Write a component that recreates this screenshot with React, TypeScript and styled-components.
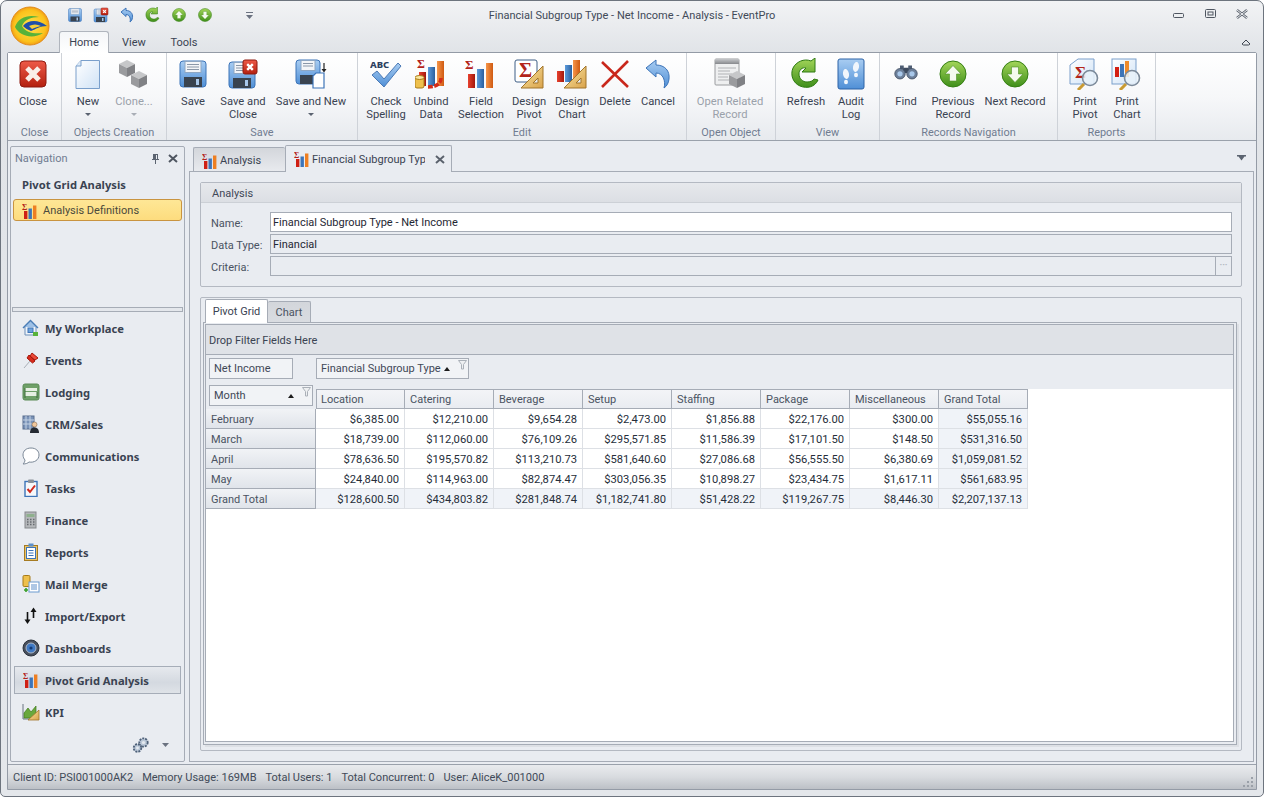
import React from "react";
import styled, { createGlobalStyle } from "styled-components";

const FONT = `Roboto, "Noto Sans", "Liberation Sans", sans-serif`;
const BOLD_FONT = `"Noto Sans", "Open Sans", "Liberation Sans", sans-serif`;

const GlobalStyle = createGlobalStyle`
  html, body {
    margin: 0;
    padding: 0;
    background: #ffffff;
  }
  body {
    font-family: ${FONT};
    font-size: 11px;
    color: #3a4352;
  }
`;

const Window = styled.div`
  width: 1264px;
  height: 797px;
  box-sizing: border-box;
  border: 1px solid #6d747e;
  border-radius: 7px 7px 5px 5px;
  background: linear-gradient(#f2f3f5 0, #e1e4e8 50px, #e4e7eb 100%);
  display: flex;
  flex-direction: column;
  overflow: hidden;
  position: relative;
`;

const TitleBar = styled.div`
  height: 28px;
  display: grid;
  grid-template-columns: 1fr auto 1fr;
  align-items: center;
`;

const LogoSlot = styled.div`
  position: absolute;
  left: 9px;
  top: 5px;
`;

const Qat = styled.div`
  display: flex;
  align-items: center;
  padding-left: 66px;
  gap: 10px;
`;

const QatMore = styled.div`
  margin-left: 18px;
  width: 16px;
  display: flex;
  justify-content: center;
`;

const Title = styled.div`
  color: #414a58;
`;

const WinButtons = styled.div`
  display: flex;
  justify-content: flex-end;
  align-items: center;
  padding: 0 15px 2px 0;
  gap: 20px;
`;

const TabRow = styled.div`
  height: 23px;
  display: flex;
  align-items: flex-end;
  justify-content: space-between;
  padding: 0 12px 0 58px;
`;

const RibbonTabs = styled.div`
  display: flex;
  align-items: flex-end;
`;

const RibbonTab = styled.div<{ $active?: boolean }>`
  width: 50px;
  height: 22px;
  box-sizing: border-box;
  display: flex;
  align-items: center;
  justify-content: center;
  color: #3a4352;
  position: relative;
  margin-bottom: -1px;
  z-index: 2;
  border-radius: 3px 3px 0 0;
  ${(p) =>
    p.$active
      ? `background: linear-gradient(#f4f6f8, #ffffff); border: 1px solid #b0b5bd; border-bottom: none;`
      : ``}
`;

const Frame = styled.div`
  flex: 1;
  margin: 0 6px 6px;
  border: 1px solid #949ba6;
  display: flex;
  flex-direction: column;
  min-height: 0;
  border-radius: 2px 2px 0 0;
`;

const Ribbon = styled.div`
  height: 88px;
  box-sizing: border-box;
  display: flex;
  background: linear-gradient(#ffffff 0, #f6f7f9 45px, #e7eaee 100%);
  border-bottom: 1px solid #9aa1ab;
`;

const Group = styled.div<{ $w: number }>`
  width: ${(p) => p.$w}px;
  box-sizing: border-box;
  display: flex;
  flex-direction: column;
  border-right: 1px solid #ced2d8;
`;

const GroupButtons = styled.div`
  flex: 1;
  display: flex;
  padding-left: 3px;
`;

const GroupCaption = styled.div`
  height: 15px;
  line-height: 15px;
  text-align: center;
  color: #707c90;
  font-size: 10.9px;
`;

const RibbonButton = styled.div<{ $w: number; $off?: boolean }>`
  width: ${(p) => p.$w}px;
  display: flex;
  flex-direction: column;
  align-items: center;
  padding-top: 5px;
  font-size: 11.2px;
  color: ${(p) => (p.$off ? "#9aa1aa" : "#3a4352")};
`;

const IconBox = styled.div`
  width: 32px;
  height: 32px;
  margin-bottom: 5px;
`;

const ButtonLabel = styled.div`
  line-height: 13px;
  text-align: center;
  white-space: pre-line;
`;

const Caret = styled.div<{ $off?: boolean }>`
  width: 0;
  height: 0;
  margin-top: 5px;
  border-left: 3px solid transparent;
  border-right: 3px solid transparent;
  border-top: 3px solid ${(p) => (p.$off ? "#a9aeb6" : "#5b6370")};
`;

const Body = styled.div`
  flex: 1;
  min-height: 0;
  display: flex;
  gap: 4px;
  padding: 5px 2px 2px;
  background: #e9ecf1;
`;

const NavPanel = styled.div`
  width: 175px;
  box-sizing: border-box;
  border: 1px solid #a6acb6;
  border-radius: 2px;
  display: flex;
  flex-direction: column;
  background: #e9ecf1;
`;

const NavHeader = styled.div`
  height: 21px;
  display: flex;
  align-items: center;
  padding: 1px 6px 0 4px;
  color: #717d92;
  gap: 8px;
`;

const NavHeaderText = styled.div`
  flex: 1;
`;

const NavTitle = styled.div`
  font-family: ${BOLD_FONT};
  font-size: 11.2px;
  font-weight: 700;
  color: #3a4352;
  padding: 8px 0 0 11px;
  height: 21px;
  line-height: 15px;
`;

const NavSelected = styled.div`
  margin: 1px 2px 0;
  height: 22px;
  box-sizing: border-box;
  background: linear-gradient(#fee796, #fddc7e);
  border: 1px solid #c99440;
  border-radius: 3px;
  display: flex;
  align-items: center;
  padding: 1px 0 0 8px;
  gap: 5px;
  color: #4b4a3c;
`;

const NavSpacer = styled.div`
  flex: 1;
`;

const NavSplitter = styled.div`
  height: 5px;
  box-sizing: border-box;
  margin: 0 1px;
  border: 1px solid #a6acb6;
  background: #e4e7ec;
`;

const NavList = styled.div`
  display: flex;
  flex-direction: column;
`;

const NavItem = styled.div<{ $active?: boolean }>`
  height: 32px;
  box-sizing: border-box;
  margin: 0 3px;
  padding: 0 0 0 8px;
  display: flex;
  align-items: center;
  gap: 5px;
  font-family: ${BOLD_FONT};
  font-weight: 700;
  font-size: 11.2px;
  color: #3a4352;
  ${(p) =>
    p.$active
      ? `height: 28px; margin: 2px 3px; background: linear-gradient(#e6e9ee, #d4d9e0 60%, #dfe3e8);
         border: 1px solid #a6adb8; padding-left: 7px;`
      : ``}
`;

const NavIcon = styled.div`
  width: 18px;
  height: 18px;
  display: flex;
  align-items: center;
  justify-content: center;
`;

const NavFooter = styled.div`
  height: 33px;
  display: flex;
  align-items: center;
  justify-content: flex-end;
  gap: 12px;
  padding: 0 15px 0 0;
`;

const Main = styled.div`
  flex: 1;
  min-width: 0;
  display: flex;
  flex-direction: column;
`;

const DocTabs = styled.div`
  height: 25px;
  display: flex;
  align-items: flex-end;
  padding-left: 4px;
  position: relative;
`;

const DocTab = styled.div<{ $active?: boolean; $w: number }>`
  width: ${(p) => p.$w}px;
  box-sizing: border-box;
  display: flex;
  align-items: center;
  gap: 2px;
  padding-left: 8px;
  border: 1px solid #a6acb6;
  border-radius: 2px 2px 0 0;
  position: relative;
  z-index: 2;
  ${(p) =>
    p.$active
      ? `height: 27px; margin-bottom: -1px; background: #e9ecf1; border-bottom: none; color: #3a4352;`
      : `height: 24px; padding-top: 2px; background: linear-gradient(#d3d6db, #e8eaee); border-bottom: none; border-right: none;`}
`;

const DocTabText = styled.div`
  width: 113px;
  white-space: nowrap;
  overflow: hidden;
`;

const DocTabMenu = styled.div`
  margin-left: auto;
  margin-right: 8px;
  align-self: center;
  padding-bottom: 2px;
`;

const DocPane = styled.div`
  flex: 1;
  min-height: 0;
  border: 1px solid #a6acb6;
  padding: 10px 11px 10px 10px;
  display: flex;
  flex-direction: column;
  gap: 10px;
`;

const DetailsGroup = styled.div`
  height: 105px;
  box-sizing: border-box;
  border: 1px solid #b4b9c2;
  border-radius: 2px;
`;

const DetailsHeader = styled.div`
  height: 19px;
  line-height: 21px;
  padding-left: 11px;
  background: linear-gradient(#e6e8ec, #dcdfe4);
  border-bottom: 1px solid #ccd0d6;
  color: #3f4857;
`;

const Fields = styled.div`
  display: grid;
  grid-template-columns: 59px 1fr;
  grid-auto-rows: 20px;
  row-gap: 2px;
  padding: 9px 9px 0 10px;
  align-items: center;
`;

const FieldLabel = styled.div`
  color: #4a5362;
  padding-top: 2px;
`;

const FieldInput = styled.div<{ $white?: boolean }>`
  height: 20px;
  box-sizing: border-box;
  border: 1px solid #a6acb6;
  background: ${(p) => (p.$white ? "#ffffff" : "#e9ecf1")};
  line-height: 20px;
  padding-left: 2px;
  color: #1f2733;
  display: flex;
  justify-content: space-between;
`;

const EllipsisButton = styled.div`
  width: 15px;
  border-left: 1px solid #a6acb6;
  color: #b4b9c2;
  text-align: center;
  font-size: 9px;
  line-height: 16px;
  font-weight: 700;
  letter-spacing: 0;
`;

const PivotGroup = styled.div`
  flex: 1;
  min-height: 0;
  box-sizing: border-box;
  border: 1px solid #b4b9c2;
  border-radius: 2px;
  padding: 1px 4px 5px 2px;
  display: flex;
  flex-direction: column;
`;

const InnerTabs = styled.div`
  height: 23px;
  display: flex;
  align-items: flex-end;
  padding-left: 2px;
`;

const InnerTab = styled.div<{ $active?: boolean; $w: number }>`
  width: ${(p) => p.$w}px;
  box-sizing: border-box;
  text-align: center;
  border: 1px solid #a6acb6;
  border-bottom: none;
  border-radius: 2px 2px 0 0;
  position: relative;
  ${(p) =>
    p.$active
      ? `height: 24px; line-height: 24px; margin-bottom: -1px; background: #ffffff; z-index: 2;`
      : `height: 21px; line-height: 21px; background: linear-gradient(#d3d6db, #d9dce1); border-left: none; color: #4a5362;`}
`;

const InnerPane = styled.div`
  flex: 1;
  min-height: 0;
  border: 1px solid #a6acb6;
  padding: 1px 2px 2px 1px;
  box-shadow: 2px 2px 0 #dde0e5;
  display: flex;
`;

const PivotFrame = styled.div`
  flex: 1;
  border: 1px solid #a6acb6;
  background: #ffffff;
  display: flex;
  flex-direction: column;
`;

const DropArea = styled.div`
  height: 29px;
  line-height: 31px;
  padding-left: 3px;
  background: #dfe2e7;
  border-bottom: 1px solid #a6acb6;
  color: #3a4352;
`;

const DataFieldRow = styled.div`
  height: 26px;
  box-sizing: border-box;
  padding: 3px 0 0 3px;
  display: flex;
  gap: 23px;
  background: #e9ecf1;
`;

const FieldChip = styled.div<{ $w: number }>`
  width: ${(p) => p.$w}px;
  height: 21px;
  box-sizing: border-box;
  border: 1px solid #a6acb6;
  background: #f1f3f6;
  padding-left: 4px;
  color: #3f4857;
  display: flex;
  align-items: center;
  position: relative;
`;

const ChipText = styled.div`
  flex: 1;
  white-space: nowrap;
  line-height: 21px;
`;

const SortArrow = styled.div`
  width: 0;
  height: 0;
  border-left: 3.5px solid transparent;
  border-right: 3.5px solid transparent;
  border-bottom: 4px solid #1c1c1c;
  margin-right: 18px;
`;

const ChipFilter = styled.div`
  position: absolute;
  right: 1px;
  top: 1px;
  line-height: 0;
`;

const HeadArea = styled.div`
  display: flex;
`;

const Corner = styled.div`
  width: 110px;
  height: 28px;
  box-sizing: border-box;
  padding: 4px 0 0 3px;
  background: #e9ecf1;
`;

const HeadRight = styled.div`
  flex: 1;
  display: flex;
  flex-direction: column;
`;

const HeadStrip = styled.div`
  height: 8px;
  background: #e9ecf1;
`;

const Cells = styled.div`
  display: flex;
`;

const ColHead = styled.div`
  width: 89px;
  height: 20px;
  box-sizing: border-box;
  border: 1px solid #a6acb6;
  border-left: none;
  background: linear-gradient(#f3f4f7, #e9ecf1);
  line-height: 20px;
  padding-left: 5px;
  color: #4a5362;
  &:first-child {
    border-left: 1px solid #a6acb6;
    padding-left: 4px;
  }
`;

const DataRow = styled.div`
  display: flex;
  height: 20px;
`;

const RowHead = styled.div`
  width: 110px;
  box-sizing: border-box;
  border: 1px solid #a6acb6;
  border-left: none;
  border-top: none;
  background: linear-gradient(#f1f3f6, #e0e4ea);
  line-height: 21px;
  padding-left: 5px;
  color: #4a5362;
`;

const DataCell = styled.div<{ $total?: boolean }>`
  width: 89px;
  box-sizing: border-box;
  border-right: 1px solid #dde0e5;
  border-bottom: 1px solid #dde0e5;
  background: ${(p) => (p.$total ? "#f0f3f8" : "#ffffff")};
  text-align: right;
  padding-right: 5px;
  font-size: 11.2px;
  line-height: 21px;
  color: #262e3a;
`;

const StatusBar = styled.div`
  height: 25px;
  box-sizing: border-box;
  border-top: 1px solid #9aa1ab;
  background: linear-gradient(#e9ebee, #d8dbdf 50%, #bcc0c6);
  display: flex;
  align-items: center;
  padding: 0 2px 0 5px;
  gap: 9px;
  color: #414a58;
`;

const StatusGrip = styled.div`
  margin-left: auto;
  align-self: flex-end;
  line-height: 0;
  padding-bottom: 1px;
`;

const SvgDefs = () => (
  <svg width="0" height="0" style={{ position: "absolute" }}>
    <defs>
      <linearGradient id="gBlue" x1="0" y1="0" x2="0" y2="1">
        <stop offset="0" stopColor="#a9cdf2" />
        <stop offset="1" stopColor="#4f8fd6" />
      </linearGradient>
      <linearGradient id="gRed" x1="0" y1="0" x2="0" y2="1">
        <stop offset="0" stopColor="#ee5a48" />
        <stop offset="1" stopColor="#b3200f" />
      </linearGradient>
      <linearGradient id="gGreen" x1="0" y1="0" x2="0" y2="1">
        <stop offset="0" stopColor="#a4d65a" />
        <stop offset="1" stopColor="#3f8f1a" />
      </linearGradient>
      <linearGradient id="gBarR" x1="0" y1="0" x2="1" y2="0">
        <stop offset="0" stopColor="#e8412e" />
        <stop offset="1" stopColor="#a3180c" />
      </linearGradient>
      <linearGradient id="gBarB" x1="0" y1="0" x2="1" y2="0">
        <stop offset="0" stopColor="#5c9bdc" />
        <stop offset="1" stopColor="#2a5f9e" />
      </linearGradient>
      <linearGradient id="gBarO" x1="0" y1="0" x2="1" y2="0">
        <stop offset="0" stopColor="#f6964a" />
        <stop offset="1" stopColor="#cf5a12" />
      </linearGradient>
      <linearGradient id="gPage" x1="0" y1="0" x2="1" y2="1">
        <stop offset="0" stopColor="#ffffff" />
        <stop offset="1" stopColor="#cfe2f6" />
      </linearGradient>
      <linearGradient id="gGrey" x1="0" y1="0" x2="0" y2="1">
        <stop offset="0" stopColor="#c4c6c9" />
        <stop offset="1" stopColor="#87898d" />
      </linearGradient>
      <linearGradient id="gRuler" x1="0" y1="0" x2="1" y2="1">
        <stop offset="0" stopColor="#fbe9a8" />
        <stop offset="1" stopColor="#d9a24a" />
      </linearGradient>
      <radialGradient id="gLogo" cx="0.5" cy="0.5" r="0.55">
        <stop offset="0" stopColor="#ffe34d" />
        <stop offset="0.75" stopColor="#fbc21c" />
        <stop offset="1" stopColor="#ee8a12" />
      </radialGradient>
    </defs>
  </svg>
);

const Logo = () => (
  <svg width="40" height="40" viewBox="0 0 40 40">
    <circle cx="20" cy="20" r="19" fill="url(#gLogo)" stroke="#e08a18" />
    <path d="M5 21C8 11 19 8 29 11C21 11 14 14 12 20C16 27 24 28 33 27C24 33 10 31 5 21Z" fill="#58b23a" />
    <path d="M13 20C18 14 28 13 37 20C30 20 26 23 21 25C18 24 15 22 13 20Z" fill="#1f4fa8" />
    <path d="M19 20C23 18 27 18 31 20C27 21 24 22 22 23Z" fill="#f4cf3a" />
  </svg>
);

const SaveIcon = ({ s = 32 }: { s?: number }) => (
  <svg width={s} height={s} viewBox="0 0 32 32">
    <rect x="3" y="3" width="26" height="26" rx="3" fill="url(#gBlue)" stroke="#3d74b8" />
    <rect x="8" y="3.5" width="16" height="11" fill="#f3f5f8" stroke="#8ea7c4" />
    <path d="M10 6.5h12M10 9h12M10 11.5h12" stroke="#8a97a8" />
    <rect x="7" y="19" width="18" height="10" fill="#39434f" />
    <rect x="19" y="21" width="3" height="6" fill="#a9c8ea" />
  </svg>
);

const RedBadge = ({ x, y, w }: { x: number; y: number; w: number }) => (
  <g transform={`translate(${x} ${y})`}>
    <rect x="0" y="0" width={w} height={w} rx="2" fill="url(#gRed)" stroke="#8e1a10" />
    <path
      d={`M${w * 0.3} ${w * 0.3}L${w * 0.7} ${w * 0.7}M${w * 0.7} ${w * 0.3}L${w * 0.3} ${w * 0.7}`}
      stroke="#fff"
      strokeWidth={w * 0.17}
    />
  </g>
);

const SaveCloseIcon = ({ s = 32 }: { s?: number }) => (
  <svg width={s} height={s} viewBox="0 0 32 32">
    <rect x="2" y="4" width="26" height="26" rx="3" fill="url(#gBlue)" stroke="#3d74b8" />
    <rect x="7" y="4.5" width="16" height="11" fill="#f3f5f8" stroke="#8ea7c4" />
    <path d="M9 7.5h10M9 10h10M9 12.5h10" stroke="#8a97a8" />
    <rect x="6" y="20" width="18" height="10" fill="#39434f" />
    <rect x="18" y="22" width="3" height="6" fill="#a9c8ea" />
    <RedBadge x={16} y={2} w={14} />
  </svg>
);

const SaveNewIcon = () => (
  <svg width="32" height="32" viewBox="0 0 32 32">
    <rect x="1" y="2" width="24" height="24" rx="3" fill="url(#gBlue)" stroke="#3d74b8" />
    <rect x="6" y="2.5" width="14" height="10" fill="#f3f5f8" stroke="#8ea7c4" />
    <path d="M8 5.5h10M8 8h10" stroke="#8a97a8" />
    <rect x="5" y="17" width="15" height="9" fill="#39434f" />
    <path d="M29 5v8" stroke="#222" strokeWidth="1.2" />
    <path d="M26.5 11h5L29 14.5Z" fill="#222" />
    <path d="M18 18l3-3h8v15H18Z" fill="#fff" stroke="#3d74b8" strokeWidth="1.2" />
  </svg>
);

const CloseIcon = () => (
  <svg width="32" height="32" viewBox="0 0 32 32">
    <rect x="3" y="3" width="26" height="26" rx="4" fill="url(#gRed)" stroke="#8e1a10" />
    <path d="M10 10L22 22M22 10L10 22" stroke="#f9efe9" strokeWidth="5" />
  </svg>
);

const NewIcon = () => (
  <svg width="32" height="32" viewBox="0 0 32 32">
    <path d="M9 2.5H27.5V30.5H4V8Z" fill="url(#gPage)" stroke="#7a9fcb" />
    <path d="M9 2.5V8H4" fill="#dce9f7" stroke="#7a9fcb" />
  </svg>
);

const Cube = ({ x, y }: { x: number; y: number }) => (
  <g transform={`translate(${x} ${y})`}>
    <path d="M0 4L8 0L16 4L8 8Z" fill="#c6c7c9" />
    <path d="M0 4V13L8 17V8Z" fill="#9a9b9e" />
    <path d="M16 4V13L8 17V8Z" fill="#808185" />
  </g>
);

const CubesIcon = () => (
  <svg width="32" height="32" viewBox="0 0 32 32">
    <Cube x={1} y={2} />
    <Cube x={13} y={13} />
  </svg>
);

const CheckIcon = () => (
  <svg width="32" height="32" viewBox="0 0 32 32">
    <text x="0" y="10" fontFamily={BOLD_FONT} fontSize="9.5" fontWeight="800" fill="#2d3f5e">
      ABC
    </text>
    <path d="M2 17L7 13L14 21L28 5L31 8L14 29Z" fill="url(#gBlue)" stroke="#4a79b5" />
  </svg>
);

const Bars = ({ x = 0, y = 0 }: { x?: number; y?: number }) => (
  <g transform={`translate(${x} ${y})`}>
    <rect x="3" y="14" width="7" height="14" fill="url(#gBarR)" />
    <rect x="12" y="9" width="7" height="19" fill="url(#gBarB)" />
    <rect x="21" y="3" width="7" height="25" fill="url(#gBarO)" />
  </g>
);

const Sigma = ({ x, y, fs }: { x: number; y: number; fs: number }) => (
  <text x={x} y={y} fontFamily={`"Liberation Serif", serif`} fontSize={fs} fontWeight="700" fill="#b3241a">
    Σ
  </text>
);

const FieldIcon = () => (
  <svg width="32" height="32" viewBox="0 0 32 32">
    <Bars y={2} />
    <Sigma x={0} y={11} fs={13} />
  </svg>
);

const UnbindIcon = () => (
  <svg width="32" height="32" viewBox="0 0 32 32">
    <Bars x={1} />
    <Sigma x={2} y={10} fs={12} />
    <rect x="0" y="19" width="9" height="11" rx="2" fill="#eec04c" stroke="#a77a18" />
    <ellipse cx="4.5" cy="19.5" rx="4.5" ry="2" fill="#fbe8a0" stroke="#a77a18" />
    <path d="M26 20C26 26 21 29 13 29" stroke="#d42c18" strokeWidth="3.5" fill="none" strokeDasharray="5 1.5" />
  </svg>
);

const Ruler = () => (
  <g>
    <path d="M30 8V30H8Z" fill="url(#gRuler)" stroke="#a1742a" />
    <path d="M25 20V25H20Z" fill="#e9ecef" stroke="#a1742a" />
  </g>
);

const DesignPivotIcon = () => (
  <svg width="32" height="32" viewBox="0 0 32 32">
    <rect x="2" y="2" width="22" height="22" rx="2" fill="#fff" stroke="#3f5f86" />
    <Sigma x={6} y={19} fs={20} />
    <Ruler />
  </svg>
);

const DesignChartIcon = () => (
  <svg width="32" height="32" viewBox="0 0 32 32">
    <rect x="1" y="13" width="7" height="11" fill="url(#gBarR)" />
    <rect x="9" y="7" width="7" height="17" fill="url(#gBarB)" />
    <rect x="17" y="2" width="7" height="22" fill="url(#gBarO)" />
    <Ruler />
  </svg>
);

const DeleteIcon = () => (
  <svg width="32" height="32" viewBox="0 0 32 32">
    <path d="M3 4L29 29M29 3L3 29" stroke="#c9281c" strokeWidth="2.6" />
  </svg>
);

const CancelIcon = ({ s = 32 }: { s?: number }) => (
  <svg width={s} height={s} viewBox="0 0 32 32">
    <path
      d="M4 10L14 2V7C23 7 28 13 27 21C26.5 25 25 28 22 30C24 23 21 15 14 15V19Z"
      fill="url(#gBlue)"
      stroke="#3d74b8"
      strokeWidth={s < 20 ? 2 : 1}
    />
  </svg>
);

const OpenRelatedIcon = () => (
  <svg width="32" height="32" viewBox="0 0 32 32">
    <rect x="1" y="1" width="24" height="26" rx="1" fill="#eeeff0" stroke="#9a9c9f" />
    <rect x="1" y="1" width="24" height="5" fill="url(#gGrey)" />
    <path d="M4 10h18M4 13h12M4 16h14M4 19h10M4 22h12" stroke="#b0b2b5" />
    <Cube x={15} y={13} />
  </svg>
);

const RefreshIcon = ({ s = 32 }: { s?: number }) => (
  <svg width={s} height={s} viewBox="0 0 32 32">
    <path
      d="M28 22C25 29 17 31 10 28C3 25 0 17 3 10C6 4 14 0 21 3L25 0V14H12L16 10C12 9 9 12 9 16C9 21 13 24 17 24C20 24 23 23 24 21Z"
      fill="url(#gGreen)"
      stroke="#2e7a12"
    />
  </svg>
);

const AuditIcon = () => (
  <svg width="32" height="32" viewBox="0 0 32 32">
    <rect x="3" y="1" width="26" height="30" rx="2" fill="url(#gBlue)" stroke="#2c62a6" />
    <ellipse cx="11" cy="16" rx="3" ry="5" fill="#f1f6fc" transform="rotate(-10 11 16)" />
    <ellipse cx="11" cy="24" rx="2" ry="2.3" fill="#f1f6fc" />
    <ellipse cx="21" cy="9" rx="3" ry="5" fill="#f1f6fc" transform="rotate(10 21 9)" />
    <ellipse cx="21" cy="17" rx="2" ry="2.3" fill="#f1f6fc" />
  </svg>
);

const FindIcon = () => (
  <svg width="32" height="32" viewBox="0 0 32 32">
    <g transform="translate(4 3) scale(0.75)">
      <rect x="12" y="9" width="8" height="7" fill="#3d4a5e" />
      <rect x="8" y="6" width="5" height="5" fill="#4e5d73" />
      <rect x="19" y="6" width="5" height="5" fill="#4e5d73" />
      <circle cx="8" cy="17" r="7" fill="#6c7f99" stroke="#3d4a5e" />
      <circle cx="24" cy="17" r="7" fill="#6c7f99" stroke="#3d4a5e" />
      <circle cx="8" cy="17" r="3.5" fill="#a9c8ea" />
      <circle cx="24" cy="17" r="3.5" fill="#a9c8ea" />
    </g>
  </svg>
);

const ArrowCircleIcon = ({ up, s = 32 }: { up?: boolean; s?: number }) => (
  <svg width={s} height={s} viewBox="0 0 32 32">
    <circle cx="16" cy="16" r="13" fill="url(#gGreen)" stroke="#367f14" />
    <g transform={up ? undefined : "rotate(180 16 16)"}>
      <path d="M16 7.5L24 16H19.5V23H12.5V16H8Z" fill="#f5faef" stroke="#4d8f27" strokeWidth="0.6" />
    </g>
  </svg>
);

const Magnifier = () => (
  <g>
    <path d="M15 26L9 32" stroke="#c99a32" strokeWidth="3" />
    <circle cx="21" cy="20" r="7.5" fill="#e9f2fa" fillOpacity="0.85" stroke="#7c8a9a" strokeWidth="1.6" />
  </g>
);

const PrintPivotIcon = () => (
  <svg width="32" height="32" viewBox="0 0 32 32">
    <path d="M9 1H25V26H1V7Z" fill="url(#gPage)" stroke="#7a9fcb" />
    <Sigma x={6} y={20} fs={17} />
    <Magnifier />
  </svg>
);

const PrintChartIcon = () => (
  <svg width="32" height="32" viewBox="0 0 32 32">
    <rect x="1" y="1" width="24" height="25" fill="url(#gPage)" stroke="#7a9fcb" />
    <rect x="4" y="9" width="4" height="10" fill="#d31f12" />
    <rect x="9" y="6" width="4" height="13" fill="#3d74b8" />
    <rect x="14" y="3" width="4" height="16" fill="#ee8a2a" />
    <Magnifier />
  </svg>
);

const SigmaBars = () => (
  <svg width="16" height="16" viewBox="0 0 16 16">
    <rect x="2" y="8" width="3.4" height="8" fill="#cf2014" />
    <rect x="6.5" y="5.5" width="3.4" height="10.5" fill="#3d74b8" />
    <rect x="11" y="2.5" width="3.4" height="13.5" fill="#ee7f22" />
    <text x="0" y="7" fontFamily={`"Liberation Serif", serif`} fontSize="8" fontWeight="700" fill="#b3241a">
      Σ
    </text>
  </svg>
);

const HomeIcon = () => (
  <svg width="18" height="18" viewBox="0 0 18 18">
    <path d="M1 9L8.5 1.5L16 9" fill="#9dc0e6" stroke="#4a7cb5" strokeWidth="1.4" />
    <path d="M3 8V16H14V8" fill="#eef3f9" stroke="#6d8fb8" />
    <rect x="6" y="9" width="5" height="4.5" fill="#6ea3dc" stroke="#3d74b8" />
    <rect x="11" y="13" width="5" height="4" fill="#58b23a" />
  </svg>
);

const PinIcon = () => (
  <svg width="18" height="18" viewBox="0 0 18 18">
    <path d="M2 17L8 10" stroke="#aab0b8" />
    <path d="M7 4L13 10L10.5 12L5 7Z" fill="#d92a1c" stroke="#a3180c" />
    <path d="M10 2L16 7L13 9L8 5Z" fill="#ee4a38" stroke="#a3180c" />
  </svg>
);

const LodgingIcon = () => (
  <svg width="18" height="18" viewBox="0 0 18 18">
    <rect x="1" y="1" width="16" height="16" rx="2" fill="#6fa068" stroke="#5b8a55" />
    <rect x="3" y="5" width="12" height="3" fill="#e6efe2" />
    <rect x="3" y="9" width="12" height="4" fill="#e6efe2" />
    <path d="M3 5V15M15 9V15" stroke="#3f6d3a" />
  </svg>
);

const CrmIcon = () => (
  <svg width="18" height="18" viewBox="0 0 18 18">
    <rect x="1" y="1" width="11" height="13" fill="#7a93b8" stroke="#5a6f90" />
    <path d="M4 1V14M8 1V14M1 5H12M1 9H12" stroke="#c4d2e4" />
    <circle cx="12.5" cy="9.5" r="2.5" fill="#f1c79c" stroke="#77583a" strokeWidth="0.5" />
    <path d="M8 18C8 14 10 12.5 12.5 12.5C15 12.5 17 14 17 18Z" fill="#252a32" />
  </svg>
);

const BubbleIcon = () => (
  <svg width="18" height="18" viewBox="0 0 18 18">
    <path
      d="M9 1C4 1 1 4 1 8C1 10 2 12 3 13C3 14.5 2 16 1 17C4 17 6 16 7 15C12 16 17 13 17 8C17 4 14 1 9 1Z"
      fill="#fff"
      stroke="#7a8796"
    />
  </svg>
);

const TasksIcon = () => (
  <svg width="18" height="18" viewBox="0 0 18 18">
    <rect x="3" y="2.5" width="12" height="15" fill="#f6f8fb" stroke="#3d74b8" strokeWidth="1.4" />
    <rect x="6" y="0.5" width="6" height="3.5" rx="1" fill="#8b9199" />
    <path d="M5.5 10L8 13L13 6.5" fill="none" stroke="#d0281c" strokeWidth="2" />
  </svg>
);

const CalcIcon = () => (
  <svg width="18" height="18" viewBox="0 0 18 18">
    <rect x="3" y="1" width="11" height="16" fill="#b4b7ba" stroke="#85888c" />
    <rect x="4.5" y="3" width="8" height="3" fill="#8fb08e" />
    <path
      d="M5 8.5h1.5M8 8.5h1.5M11 8.5h1.5M5 11h1.5M8 11h1.5M11 11h1.5M5 13.5h1.5M8 13.5h1.5M11 13.5h1.5"
      stroke="#666a6f"
      strokeWidth="1.4"
    />
  </svg>
);

const ReportsIcon = () => (
  <svg width="18" height="18" viewBox="0 0 18 18">
    <rect x="2.5" y="2.5" width="13" height="15" fill="#eac46a" stroke="#a67b22" />
    <rect x="4.5" y="4.5" width="9" height="11" fill="#fff" stroke="#3d74b8" />
    <rect x="6.5" y="0.5" width="5" height="3" fill="#5d8fca" />
    <path d="M6.5 7.5h5M6.5 10h5M6.5 12.5h5" stroke="#3d74b8" />
  </svg>
);

const MailIcon = () => (
  <svg width="18" height="18" viewBox="0 0 18 18">
    <rect x="1" y="0.5" width="7" height="11" rx="1.2" fill="#eec04c" stroke="#a77a18" />
    <rect x="7" y="7" width="10" height="10" fill="#fff" stroke="#6d9bd0" />
    <path d="M9 10h6M9 12h6M9 14h6" stroke="#5d8fca" />
    <path d="M4 13v4M2 15h4" stroke="#3aa028" strokeWidth="1.6" />
  </svg>
);

const ImportIcon = () => (
  <svg width="18" height="18" viewBox="0 0 18 18">
    <path d="M5.5 5V14M11.5 3V11" stroke="#111" strokeWidth="1.6" />
    <path d="M2.5 12.5H8.5L5.5 17Z" fill="#111" />
    <path d="M8.5 5H14.5L11.5 0.5Z" fill="#111" />
  </svg>
);

const DashIcon = () => (
  <svg width="18" height="18" viewBox="0 0 18 18">
    <circle cx="9" cy="9" r="8" fill="#48505e" stroke="#2c323c" />
    <circle cx="9" cy="9" r="5" fill="#3f79c4" stroke="#aeb9c8" />
    <circle cx="9" cy="9" r="1.6" fill="#123b78" />
  </svg>
);

const KpiIcon = () => (
  <svg width="18" height="18" viewBox="0 0 18 18">
    <path d="M1 1V16H17" fill="none" stroke="#6a7482" />
    <path d="M2 10L6 5L9 9L14 3V15H2Z" fill="#69a83c" stroke="#3f7a1c" strokeWidth="0.7" />
    <path d="M17 7V17H6Z" fill="url(#gRuler)" stroke="#a1742a" strokeWidth="0.8" />
  </svg>
);

const GearsIcon = () => (
  <svg width="18" height="18" viewBox="0 0 18 18">
    <circle cx="11.5" cy="6.5" r="4.2" fill="#b9c6d6" stroke="#4f6179" strokeWidth="1.8" strokeDasharray="2 1" />
    <circle cx="11.5" cy="6.5" r="1.6" fill="#e4e9ef" />
    <circle cx="5.5" cy="12" r="3.8" fill="#b9c6d6" stroke="#4f6179" strokeWidth="1.8" strokeDasharray="2 1" />
    <circle cx="5.5" cy="12" r="1.4" fill="#e4e9ef" />
  </svg>
);

const Funnel = () => (
  <svg width="9" height="10" viewBox="0 0 9 10">
    <path d="M0.5 0.5H8.5L5.5 4.5V9H3.5V4.5Z" fill="#eef0f2" stroke="#aab0b8" />
  </svg>
);

const SmallCaret = () => (
  <svg width="9" height="6" viewBox="0 0 9 6">
    <path d="M0 0H9V1.5H7.5L4.5 5.5L1.5 1.5H0Z" fill="#5b6370" />
  </svg>
);

const ribbonGroups: {
  caption: string;
  w: number;
  buttons: { label: string; w: number; icon: React.ReactNode; off?: boolean; caret?: boolean }[];
}[] = [
  { caption: "Close", w: 54, buttons: [{ label: "Close", w: 44, icon: <CloseIcon /> }] },
  {
    caption: "Objects Creation",
    w: 105,
    buttons: [
      { label: "New", w: 46, icon: <NewIcon />, caret: true },
      { label: "Clone...", w: 46, icon: <CubesIcon />, off: true, caret: true },
    ],
  },
  {
    caption: "Save",
    w: 191,
    buttons: [
      { label: "Save", w: 46, icon: <SaveIcon /> },
      { label: "Save and\nClose", w: 54, icon: <SaveCloseIcon /> },
      { label: "Save and New", w: 82, icon: <SaveNewIcon />, caret: true },
    ],
  },
  {
    caption: "Edit",
    w: 329,
    buttons: [
      { label: "Check\nSpelling", w: 50, icon: <CheckIcon /> },
      { label: "Unbind\nData", w: 40, icon: <UnbindIcon /> },
      { label: "Field\nSelection", w: 60, icon: <FieldIcon /> },
      { label: "Design\nPivot", w: 36, icon: <DesignPivotIcon /> },
      { label: "Design\nChart", w: 50, icon: <DesignChartIcon /> },
      { label: "Delete", w: 36, icon: <DeleteIcon /> },
      { label: "Cancel", w: 50, icon: <CancelIcon /> },
    ],
  },
  {
    caption: "Open Object",
    w: 89,
    buttons: [{ label: "Open Related\nRecord", w: 80, icon: <OpenRelatedIcon />, off: true }],
  },
  {
    caption: "View",
    w: 104,
    buttons: [
      { label: "Refresh", w: 54, icon: <RefreshIcon /> },
      { label: "Audit\nLog", w: 36, icon: <AuditIcon /> },
    ],
  },
  {
    caption: "Records Navigation",
    w: 178,
    buttons: [
      { label: "Find", w: 46, icon: <FindIcon /> },
      { label: "Previous\nRecord", w: 48, icon: <ArrowCircleIcon up /> },
      { label: "Next Record", w: 76, icon: <ArrowCircleIcon /> },
    ],
  },
  {
    caption: "Reports",
    w: 98,
    buttons: [
      { label: "Print\nPivot", w: 48, icon: <PrintPivotIcon /> },
      { label: "Print\nChart", w: 36, icon: <PrintChartIcon /> },
    ],
  },
];

const navItems: { label: string; icon: React.ReactNode; active?: boolean }[] = [
  { label: "My Workplace", icon: <HomeIcon /> },
  { label: "Events", icon: <PinIcon /> },
  { label: "Lodging", icon: <LodgingIcon /> },
  { label: "CRM/Sales", icon: <CrmIcon /> },
  { label: "Communications", icon: <BubbleIcon /> },
  { label: "Tasks", icon: <TasksIcon /> },
  { label: "Finance", icon: <CalcIcon /> },
  { label: "Reports", icon: <ReportsIcon /> },
  { label: "Mail Merge", icon: <MailIcon /> },
  { label: "Import/Export", icon: <ImportIcon /> },
  { label: "Dashboards", icon: <DashIcon /> },
  { label: "Pivot Grid Analysis", icon: <SigmaBars />, active: true },
  { label: "KPI", icon: <KpiIcon /> },
];

const columns = ["Location", "Catering", "Beverage", "Setup", "Staffing", "Package", "Miscellaneous", "Grand Total"];

const rows: { name: string; values: string[] }[] = [
  {
    name: "February",
    values: ["$6,385.00", "$12,210.00", "$9,654.28", "$2,473.00", "$1,856.88", "$22,176.00", "$300.00", "$55,055.16"],
  },
  {
    name: "March",
    values: ["$18,739.00", "$112,060.00", "$76,109.26", "$295,571.85", "$11,586.39", "$17,101.50", "$148.50", "$531,316.50"],
  },
  {
    name: "April",
    values: ["$78,636.50", "$195,570.82", "$113,210.73", "$581,640.60", "$27,086.68", "$56,555.50", "$6,380.69", "$1,059,081.52"],
  },
  {
    name: "May",
    values: ["$24,840.00", "$114,963.00", "$82,874.47", "$303,056.35", "$10,898.27", "$23,434.75", "$1,617.11", "$561,683.95"],
  },
  {
    name: "Grand Total",
    values: ["$128,600.50", "$434,803.82", "$281,848.74", "$1,182,741.80", "$51,428.22", "$119,267.75", "$8,446.30", "$2,207,137.13"],
  },
];

const App = () => (
  <>
    <GlobalStyle />
    <SvgDefs />
    <Window>
      <LogoSlot>
        <Logo />
      </LogoSlot>
      <TitleBar>
        <Qat>
          <SaveIcon s={16} />
          <SaveCloseIcon s={16} />
          <CancelIcon s={16} />
          <RefreshIcon s={16} />
          <ArrowCircleIcon up s={16} />
          <ArrowCircleIcon s={16} />
          <QatMore>
            <svg width="7" height="7" viewBox="0 0 7 7">
              <path d="M0 0H7V1H0ZM0 3H7L3.5 7Z" fill="#6b7280" />
            </svg>
          </QatMore>
        </Qat>
        <Title>Financial Subgroup Type - Net Income - Analysis - EventPro</Title>
        <WinButtons>
          <svg width="12" height="6" viewBox="0 0 12 6" style={{ marginTop: 4 }}>
            <rect x="0.5" y="0.5" width="10" height="4" rx="1" fill="none" stroke="#4f5661" />
          </svg>
          <svg width="11" height="10" viewBox="0 0 11 10">
            <rect x="0.5" y="0.5" width="10" height="8" rx="1" fill="none" stroke="#4f5661" />
            <rect x="3" y="3" width="5" height="3" fill="none" stroke="#4f5661" />
          </svg>
          <svg width="12" height="10" viewBox="0 0 12 10">
            <path d="M1 1L11 9M11 1L1 9" stroke="#5b626d" strokeWidth="2.4" />
            <path d="M1 1L11 9M11 1L1 9" stroke="#eef0f2" strokeWidth="1" />
          </svg>
        </WinButtons>
      </TitleBar>
      <TabRow>
        <RibbonTabs>
          <RibbonTab $active>Home</RibbonTab>
          <RibbonTab>View</RibbonTab>
          <RibbonTab>Tools</RibbonTab>
        </RibbonTabs>
        <svg width="10" height="8" viewBox="0 0 10 8" style={{ marginBottom: 6 }}>
          <path d="M1 6L5 2L9 6L7.5 7H2.5Z" fill="none" stroke="#3f4651" />
        </svg>
      </TabRow>
      <Frame>
        <Ribbon>
          {ribbonGroups.map((group) => (
            <Group key={group.caption} $w={group.w}>
              <GroupButtons>
                {group.buttons.map((button) => (
                  <RibbonButton key={button.label} $w={button.w} $off={button.off}>
                    <IconBox>{button.icon}</IconBox>
                    <ButtonLabel>{button.label}</ButtonLabel>
                    {button.caret && <Caret $off={button.off} />}
                  </RibbonButton>
                ))}
              </GroupButtons>
              <GroupCaption>{group.caption}</GroupCaption>
            </Group>
          ))}
        </Ribbon>
        <Body>
          <NavPanel>
            <NavHeader>
              <NavHeaderText>Navigation</NavHeaderText>
              <svg width="9" height="11" viewBox="0 0 9 11">
                <path d="M2 1H7V6H8V7H1V6H2ZM5 2V6H6V2ZM4 7H5V11H4Z" fill="#5b6370" />
              </svg>
              <svg width="10" height="9" viewBox="0 0 10 9">
                <path d="M1 1L9 8M9 1L1 8" stroke="#4f5661" strokeWidth="2" />
              </svg>
            </NavHeader>
            <NavTitle>Pivot Grid Analysis</NavTitle>
            <NavSelected>
              <SigmaBars />
              Analysis Definitions
            </NavSelected>
            <NavSpacer />
            <NavSplitter />
            <NavList>
              {navItems.map((item) => (
                <NavItem key={item.label} $active={item.active}>
                  <NavIcon>{item.icon}</NavIcon>
                  {item.label}
                </NavItem>
              ))}
            </NavList>
            <NavFooter>
              <GearsIcon />
              <svg width="7" height="4" viewBox="0 0 7 4">
                <path d="M0 0H7L3.5 4Z" fill="#6b7280" />
              </svg>
            </NavFooter>
          </NavPanel>
          <Main>
            <DocTabs>
              <DocTab $w={92}>
                <SigmaBars />
                Analysis
              </DocTab>
              <DocTab $active $w={167}>
                <SigmaBars />
                <DocTabText>Financial Subgroup Type</DocTabText>
                <svg width="10" height="9" viewBox="0 0 10 9" style={{ marginLeft: 8 }}>
                  <path d="M1 1L9 8M9 1L1 8" stroke="#5b626d" strokeWidth="2" />
                </svg>
              </DocTab>
              <DocTabMenu>
                <SmallCaret />
              </DocTabMenu>
            </DocTabs>
            <DocPane>
              <DetailsGroup>
                <DetailsHeader>Analysis</DetailsHeader>
                <Fields>
                  <FieldLabel>Name:</FieldLabel>
                  <FieldInput $white>Financial Subgroup Type - Net Income</FieldInput>
                  <FieldLabel>Data Type:</FieldLabel>
                  <FieldInput>Financial</FieldInput>
                  <FieldLabel>Criteria:</FieldLabel>
                  <FieldInput>
                    <span />
                    <EllipsisButton>···</EllipsisButton>
                  </FieldInput>
                </Fields>
              </DetailsGroup>
              <PivotGroup>
                <InnerTabs>
                  <InnerTab $active $w={63}>
                    Pivot Grid
                  </InnerTab>
                  <InnerTab $w={43}>Chart</InnerTab>
                </InnerTabs>
                <InnerPane>
                  <PivotFrame>
                    <DropArea>Drop Filter Fields Here</DropArea>
                    <DataFieldRow>
                      <FieldChip $w={84}>
                        <ChipText>Net Income</ChipText>
                      </FieldChip>
                      <FieldChip $w={153}>
                        <ChipText>Financial Subgroup Type</ChipText>
                        <SortArrow />
                        <ChipFilter>
                          <Funnel />
                        </ChipFilter>
                      </FieldChip>
                    </DataFieldRow>
                    <HeadArea>
                      <Corner>
                        <FieldChip $w={104}>
                          <ChipText>Month</ChipText>
                          <SortArrow />
                          <ChipFilter>
                            <Funnel />
                          </ChipFilter>
                        </FieldChip>
                      </Corner>
                      <HeadRight>
                        <HeadStrip />
                        <Cells>
                          {columns.map((column) => (
                            <ColHead key={column}>{column}</ColHead>
                          ))}
                        </Cells>
                      </HeadRight>
                    </HeadArea>
                    {rows.map((row, rowIndex) => (
                      <DataRow key={row.name}>
                        <RowHead>{row.name}</RowHead>
                        {row.values.map((value, colIndex) => (
                          <DataCell
                            key={colIndex}
                            $total={rowIndex === rows.length - 1 || colIndex === row.values.length - 1}
                          >
                            {value}
                          </DataCell>
                        ))}
                      </DataRow>
                    ))}
                  </PivotFrame>
                </InnerPane>
              </PivotGroup>
            </DocPane>
          </Main>
        </Body>
        <StatusBar>
          <span>Client ID: PSI001000AK2</span>
          <span>Memory Usage: 169MB</span>
          <span>Total Users: 1</span>
          <span>Total Concurrent: 0</span>
          <span>User: AliceK_001000</span>
          <StatusGrip>
            <svg width="12" height="12" viewBox="0 0 12 12">
              <path d="M9 1h2v2H9ZM5 5h2v2H5ZM9 5h2v2H9ZM1 9h2v2H1ZM5 9h2v2H5ZM9 9h2v2H9Z" fill="#9aa0a8" />
            </svg>
          </StatusGrip>
        </StatusBar>
      </Frame>
    </Window>
  </>
);

export default App;
